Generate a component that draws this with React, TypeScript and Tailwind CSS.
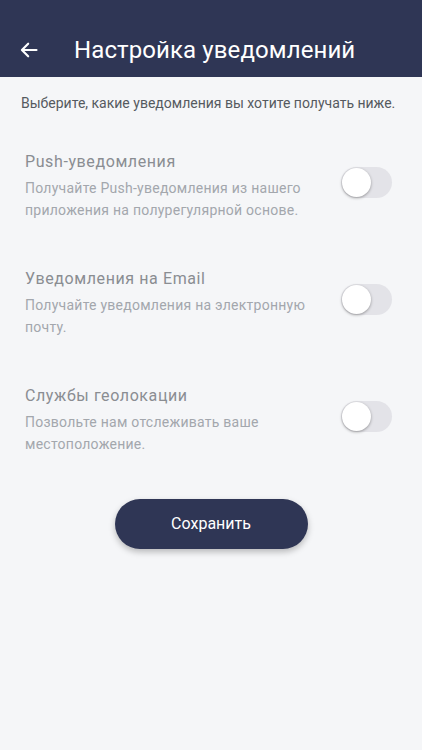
import { useState } from "react";

const items = [
  {
    title: "Push-уведомления",
    desc: "Получайте Push-уведомления из нашего приложения на полурегулярной основе.",
  },
  {
    title: "Уведомления на Email",
    desc: "Получайте уведомления на электронную почту.",
  },
  {
    title: "Службы геолокации",
    desc: "Позвольте нам отслеживать ваше местоположение.",
  },
];

function Toggle({ on, onClick }: { on: boolean; onClick: () => void }) {
  return (
    <button
      onClick={onClick}
      className={`relative w-[51px] h-[31px] rounded-full shrink-0 ${on ? "bg-[#2f3655]" : "bg-[#e3e3e8]"}`}
    >
      <span
        className={`absolute top-[1px] w-[29px] h-[29px] rounded-full bg-white shadow-[0_1px_3px_rgba(0,0,0,0.35)] ${on ? "left-[21px]" : "left-[1px]"}`}
      />
    </button>
  );
}

export default function App() {
  const [state, setState] = useState([false, false, false]);

  return (
    <div className="min-h-[750px] bg-[#f5f6f8] font-['Roboto',sans-serif]">
      <div className="h-[77px] bg-[#2f3655] flex items-center pt-[22px] px-[19px]">
        <svg width="20" height="20" viewBox="0 0 24 24" fill="none" stroke="white" strokeWidth="2.6" strokeLinecap="round" strokeLinejoin="round">
          <path d="M21 12H4M11 4.5L3.5 12l7.5 7.5" />
        </svg>
        <h1 className="ml-[35px] text-white text-[24px] leading-none tracking-[0.1px]">Настройка уведомлений</h1>
      </div>

      <p className="pt-[16px] px-[21px] text-[14px] leading-[20px] text-[#555a60]">
        Выберите, какие уведомления вы хотите получать ниже.
      </p>

      <div className="mt-[37px] flex flex-col gap-[46px] pl-[25px] pr-[30px]">
        {items.map((it, i) => (
          <div key={i} className="flex items-start justify-between">
            <div className="w-[295px]">
              <div className="text-[16px] leading-[24px] tracking-[0.6px] text-[#8a8d92]">{it.title}</div>
              <div className="mt-[3px] text-[14px] leading-[22px] tracking-[0.25px] text-[#a3a7ad]">{it.desc}</div>
            </div>
            <div className="mt-[17px]">
              <Toggle
                on={state[i]}
                onClick={() => setState(state.map((v, j) => (j === i ? !v : v)))}
              />
            </div>
          </div>
        ))}
      </div>

      <div className="flex justify-center mt-[44px]">
        <button className="w-[193px] h-[50px] rounded-full bg-[#2f3655] text-white text-[16px] shadow-[0_3px_6px_rgba(0,0,0,0.25)]">
          Сохранить
        </button>
      </div>
    </div>
  );
}
